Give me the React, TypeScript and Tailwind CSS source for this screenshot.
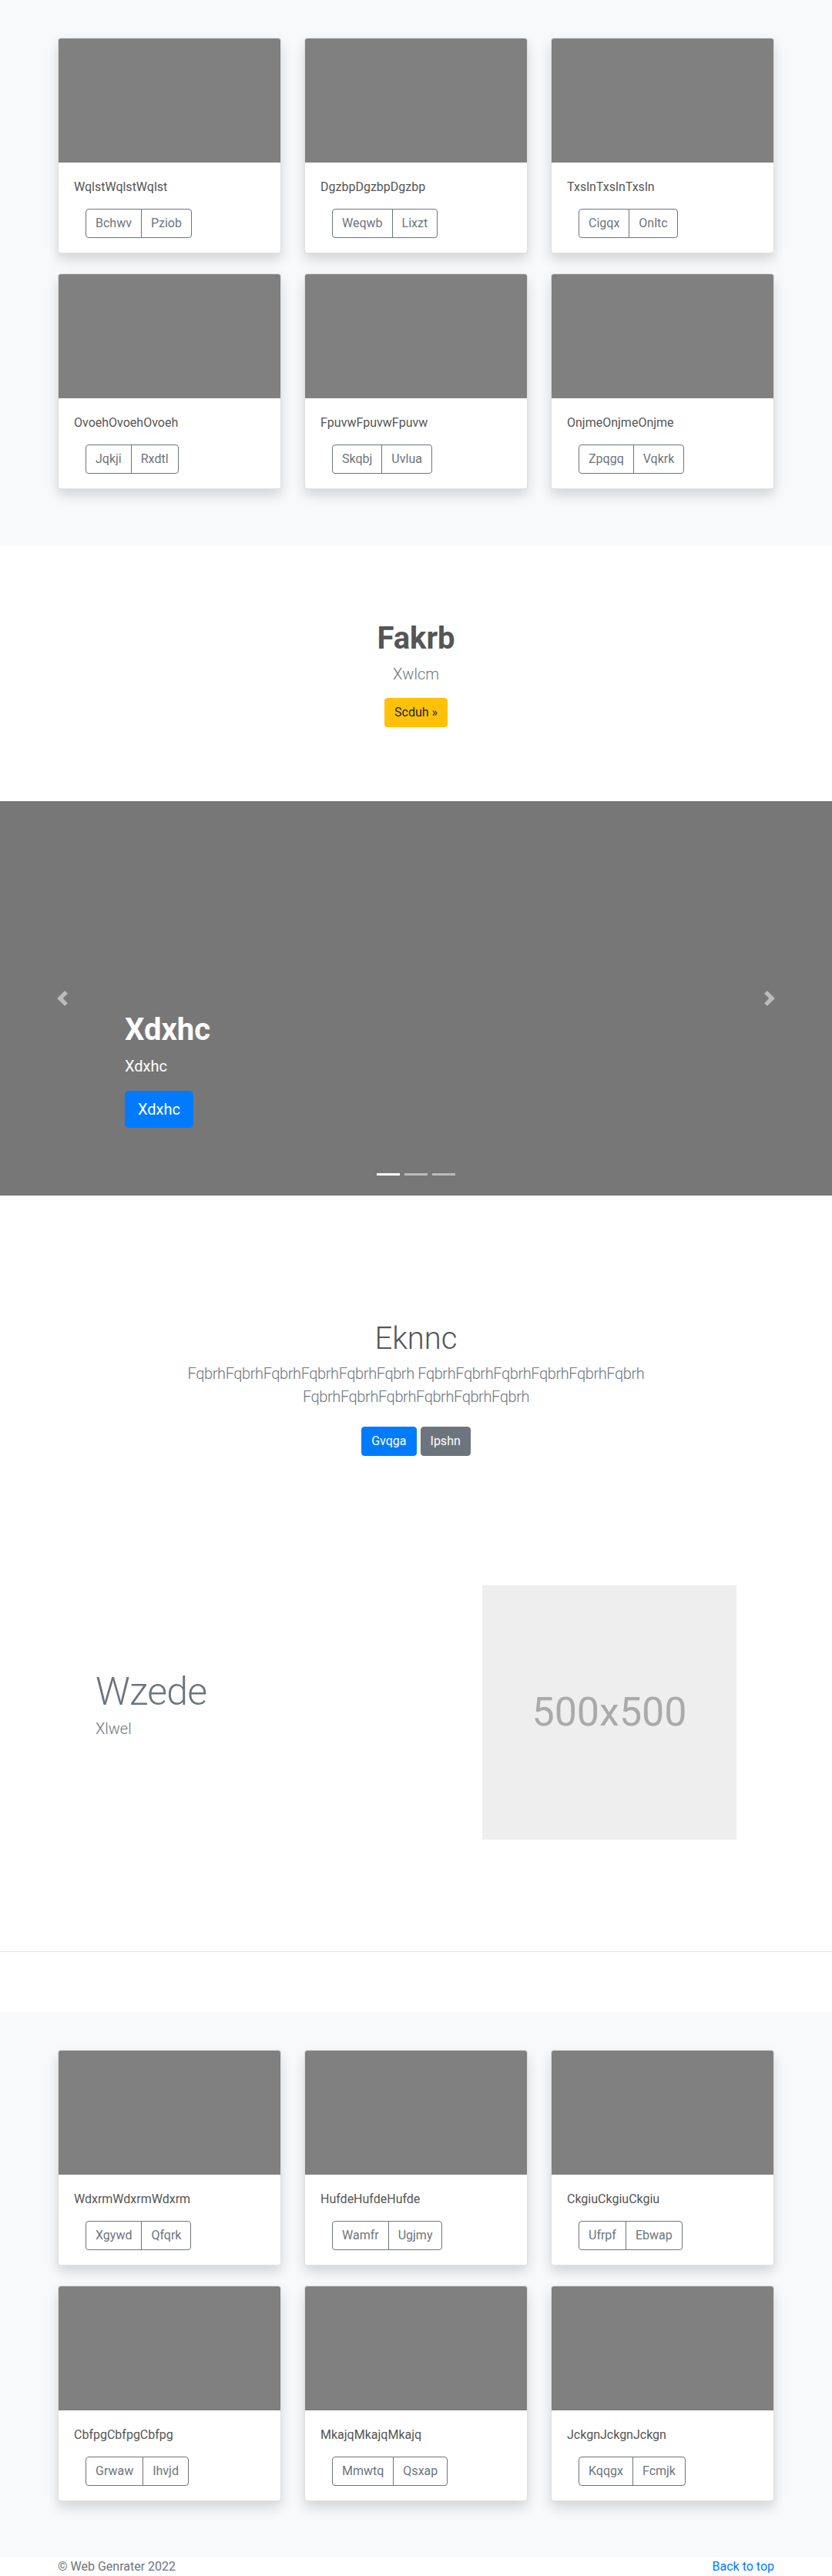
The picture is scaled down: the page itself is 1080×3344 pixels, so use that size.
import React from "react";

interface AlbumCard {
  title: string;
  left: string;
  right: string;
}

const topCards: AlbumCard[] = [
  { title: "WqlstWqlstWqlst", left: "Bchwv", right: "Pziob" },
  { title: "DgzbpDgzbpDgzbp", left: "Weqwb", right: "Lixzt" },
  { title: "TxslnTxslnTxsln", left: "Cigqx", right: "Onltc" },
  { title: "OvoehOvoehOvoeh", left: "Jqkji", right: "Rxdtl" },
  { title: "FpuvwFpuvwFpuvw", left: "Skqbj", right: "Uvlua" },
  { title: "OnjmeOnjmeOnjme", left: "Zpqgq", right: "Vqkrk" },
];

const bottomCards: AlbumCard[] = [
  { title: "WdxrmWdxrmWdxrm", left: "Xgywd", right: "Qfqrk" },
  { title: "HufdeHufdeHufde", left: "Wamfr", right: "Ugjmy" },
  { title: "CkgiuCkgiuCkgiu", left: "Ufrpf", right: "Ebwap" },
  { title: "CbfpgCbfpgCbfpg", left: "Grwaw", right: "Ihvjd" },
  { title: "MkajqMkajqMkajq", left: "Mmwtq", right: "Qsxap" },
  { title: "JckgnJckgnJckgn", left: "Kqqgx", right: "Fcmjk" },
];

function Card({ card }: { card: AlbumCard }) {
  return (
    <div className="flex flex-col overflow-hidden rounded-[4px] border border-black/[0.125] bg-white shadow-[0_8px_16px_rgba(0,0,0,0.15)]">
      <div className="h-[161px] bg-[#808080]" />
      <div className="px-5 pt-5 pb-[19px]">
        <p className="mb-4 text-base leading-6 text-[#555]">{card.title}</p>
        <div className="ml-[15px] flex">
          <button className="rounded-l-[4px] border border-[#6c757d] px-3 py-1.5 text-base leading-6 text-[#6c757d]">
            {card.left}
          </button>
          <button className="-ml-px rounded-r-[4px] border border-[#6c757d] px-3 py-1.5 text-base leading-6 text-[#6c757d]">
            {card.right}
          </button>
        </div>
      </div>
    </div>
  );
}

function Album({ cards }: { cards: AlbumCard[] }) {
  return (
    <section className="bg-[#f8f9fa] pt-[49px] pb-[73px]">
      <div className="mx-auto grid w-[930px] grid-cols-3 gap-x-[30px] gap-y-[26px]">
        {cards.map((card) => (
          <Card key={card.title} card={card} />
        ))}
      </div>
    </section>
  );
}

function Chevron({ dir }: { dir: "prev" | "next" }) {
  return (
    <svg width="20" height="20" viewBox="0 0 8 8" className="opacity-50">
      <path
        fill="#fff"
        d={
          dir === "prev"
            ? "M5.25 0l-4 4 4 4 1.5-1.5L4.25 4l2.5-2.5L5.25 0z"
            : "M2.75 0l-1.5 1.5L3.75 4l-2.5 2.5L2.75 8l4-4-4-4z"
        }
      />
    </svg>
  );
}

function Carousel() {
  return (
    <section className="relative flex h-[512px] flex-col justify-end bg-[#777] pb-[88px] pl-[162px]">
      <h1 className="mb-2 pt-[2px] text-[40px] font-bold leading-[48px] text-white">Xdxhc</h1>
      <p className="mb-[17px] text-xl leading-[30px] text-white">Xdxhc</p>
      <button className="w-fit rounded-[5px] border border-[#007bff] bg-[#007bff] px-4 py-2 text-xl leading-[30px] text-white">
        Xdxhc
      </button>

      {/* controls + indicators sit over the slide */}
      <div className="absolute top-0 left-0 flex h-full w-[15%] items-center justify-center">
        <Chevron dir="prev" />
      </div>
      <div className="absolute top-0 right-0 flex h-full w-[15%] items-center justify-center">
        <Chevron dir="next" />
      </div>

      <div className="absolute right-0 bottom-0 left-0 mb-4 flex justify-center">
        <span className="mx-[3px] my-[10px] h-[3px] w-[30px] bg-white" />
        <span className="mx-[3px] my-[10px] h-[3px] w-[30px] bg-white/50" />
        <span className="mx-[3px] my-[10px] h-[3px] w-[30px] bg-white/50" />
      </div>
    </section>
  );
}

export default function App() {
  return (
    <div className="min-h-[3344px] bg-white font-[Roboto,'Liberation_Sans',sans-serif]">
      <Album cards={topCards} />

      <section className="py-24 text-center">
        <h1 className="mb-2 pt-[2px] pb-0 text-[40px] font-bold leading-[46px] text-[#555]">Fakrb</h1>
        <p className="mb-4 text-xl font-light leading-[30px] text-[#6c757d]">Xwlcm</p>
        <button className="rounded-[4px] border border-[#ffc107] bg-[#ffc107] px-3 py-1.5 text-base leading-6 text-[#212529]">
          Scduh »
        </button>
      </section>

      <Carousel />

      <section className="pt-[160px] pb-[160px] text-center">
        <h1 className="mb-2 pt-[3px] text-[40px] font-light leading-[45px] text-[#555]">Eknnc</h1>
        <p className="mx-auto mb-6 max-w-[640px] text-xl font-light leading-[30px] tracking-[-0.4px] text-[#6c757d]">
          FqbrhFqbrhFqbrhFqbrhFqbrhFqbrh FqbrhFqbrhFqbrhFqbrhFqbrhFqbrh FqbrhFqbrhFqbrhFqbrhFqbrhFqbrh
        </p>
        <div className="mb-2 flex justify-center gap-[5px]">
          <button className="rounded-[4px] border border-[#007bff] bg-[#007bff] px-3 py-1.5 text-base leading-6 text-white">
            Gvqga
          </button>
          <button className="rounded-[4px] border border-[#6c757d] bg-[#6c757d] px-3 py-1.5 text-base leading-6 text-white">
            Ipshn
          </button>
        </div>
      </section>

      <section className="flex items-center px-[124px]">
        <div className="flex-1">
          <h2 className="mb-2 text-[50px] font-light leading-[50px] tracking-[-0.8px] text-[#6c757d]">Wzede</h2>
          <p className="mb-4 text-xl font-light leading-[30px] text-[#6c757d]">Xlwel</p>
        </div>
        <div className="flex h-[330px] w-[330px] items-center justify-center bg-[#eee] text-[52px] text-[#aaa]">
          500x500
        </div>
      </section>

      <hr className="mt-[145px] mb-[78px] border-t border-black/10" />

      <Album cards={bottomCards} />

      <footer className="mx-auto flex w-[930px] justify-between pb-12 text-base leading-6">
        <p className="text-[#6c757d]">© Web Genrater 2022</p>
        <a href="#" className="text-[#007bff]">
          Back to top
        </a>
      </footer>
    </div>
  );
}
